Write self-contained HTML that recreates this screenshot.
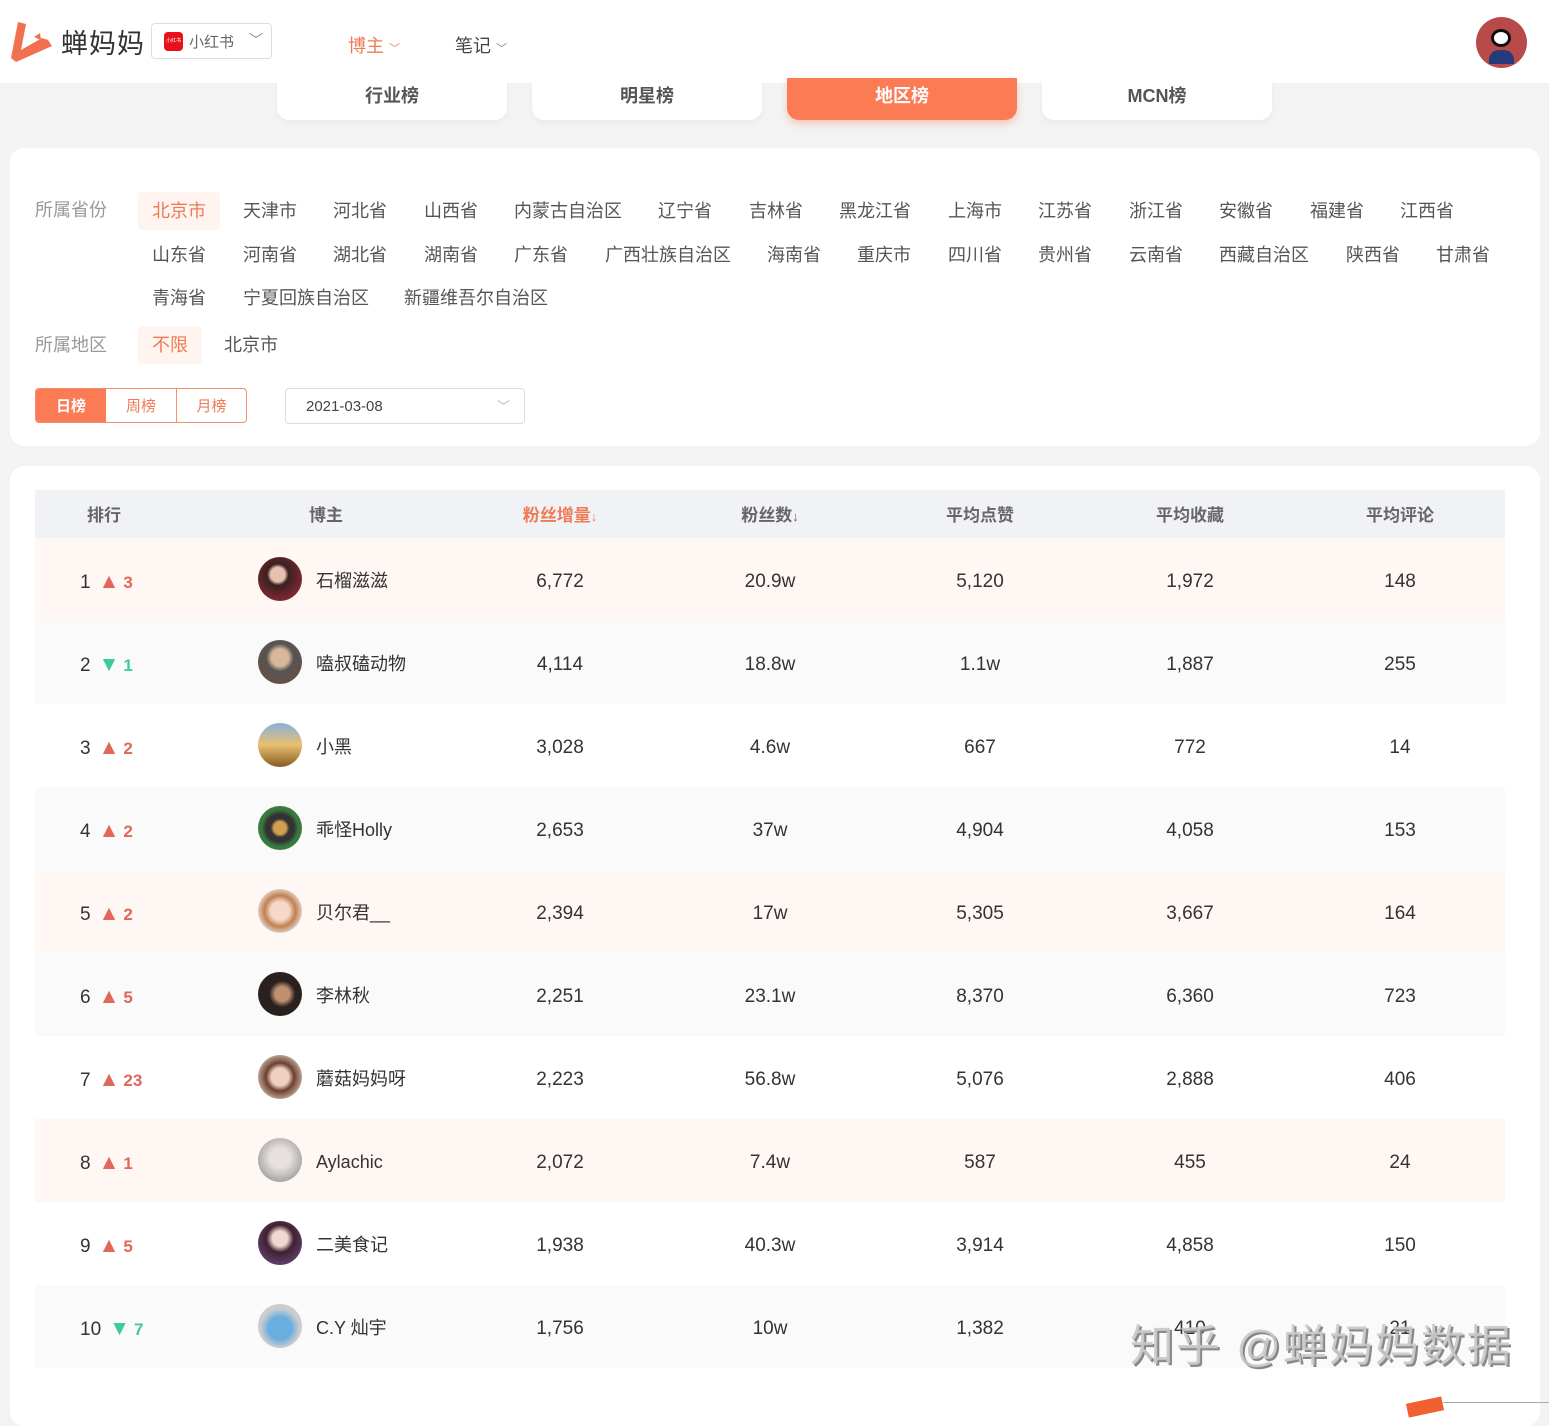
<!DOCTYPE html>
<html><head><meta charset="utf-8"><style>
*{margin:0;padding:0;box-sizing:border-box}
body{width:1549px;height:1410px;overflow:hidden;background:#f3f3f3;font-family:"Liberation Sans","Noto Sans CJK SC",sans-serif;color:#333;position:relative}
.abs{position:absolute}
.hdr{left:0;top:0;width:1549px;height:83px;background:#fff}
.tab{top:78px;width:230px;height:42px;background:#fff;border-radius:0 0 12px 12px;text-align:center;line-height:36px;font-size:18px;font-weight:bold;color:#555;box-shadow:0 3px 6px rgba(0,0,0,.04)}
.card{left:10px;width:1530px;background:#fff;border-radius:14px}
.p{font-size:18px;color:#555;white-space:nowrap;line-height:26px}
.lab{font-size:18px;color:#999;line-height:26px}
.sel{background:#fff4ef;color:#f07a56;padding:6px 14px;border-radius:4px}
.row{left:35px;width:1470px;height:83px}
.c{position:absolute;top:2px;height:100%;line-height:83px;font-size:19px;color:#333;text-align:center;width:200px}
.hc{position:absolute;top:2px;line-height:48px;font-size:17px;font-weight:bold;color:#666;text-align:center;width:200px}
.rk{position:absolute;left:45px;top:2px;line-height:83px;font-size:19px;color:#333}
.up{color:#e0675a;font-weight:bold;font-size:17px;margin-left:8px}
.dn{color:#3ccc9a;font-weight:bold;font-size:17px;margin-left:8px}
.t{font-size:21px;font-weight:normal;margin-right:4px}
.av{position:absolute;left:223px;top:19px;width:44px;height:44px;border-radius:50%}
.nm{position:absolute;left:281px;top:2px;line-height:83px;font-size:18px;color:#333}
</style></head><body>
<div class="abs hdr"></div>
<svg class="abs" style="left:8px;top:20px" width="46" height="44" viewBox="0 0 46 44"><path d="M10 2 L18 4 L13 30 L34 18 L40 20 L44 26 L8 42 L3 38 Z" fill="#f07050"/><path d="M26 17 L32 13 L33 20 Z" fill="#f07050"/></svg>
<div class="abs" style="left:61px;top:22px;font-size:27px;color:#333;letter-spacing:1px">蝉妈妈</div>
<div class="abs" style="left:151px;top:23px;width:121px;height:36px;border:1px solid #ddd;border-radius:4px"></div>
<div class="abs" style="left:164px;top:32px;width:19px;height:19px;background:#e8101a;border-radius:4px;font-size:5px;color:#fff;text-align:center;line-height:19px">小红书</div>
<div class="abs" style="left:189px;top:31px;font-size:15px;color:#666">小红书</div>
<div class="abs" style="left:249px;top:30px;font-size:14px;color:#888">﹀</div>
<div class="abs" style="left:348px;top:32px;font-size:18px;color:#f07a56">博主 <span style="font-size:11px">﹀</span></div>
<div class="abs" style="left:455px;top:32px;font-size:18px;color:#444">笔记 <span style="font-size:11px;color:#888">﹀</span></div>
<div class="abs" style="left:1476px;top:17px;width:51px;height:51px;border-radius:50%;background:#b84a4a"><div style="position:absolute;left:15px;top:12px;width:20px;height:18px;border-radius:50%;background:#fff;border:3px solid #111"></div><div style="position:absolute;left:13px;top:33px;width:25px;height:14px;border-radius:10px 10px 0 0;background:#243a7a"></div></div>

<div class="abs tab" style="left:277px">行业榜</div>
<div class="abs tab" style="left:532px">明星榜</div>
<div class="abs tab" style="left:787px;background:#fb7b55;color:#fff;box-shadow:0 4px 8px rgba(251,123,85,.35)">地区榜</div>
<div class="abs tab" style="left:1042px">MCN榜</div>

<div class="abs card" style="top:148px;height:298px"></div>
<div class="abs lab" style="left:35px;top:197px">所属省份</div>
<div class="abs p sel" style="left:138px;top:192px">北京市</div>
<div class="abs p" style="left:243px;top:198px">天津市</div>
<div class="abs p" style="left:333px;top:198px">河北省</div>
<div class="abs p" style="left:424px;top:198px">山西省</div>
<div class="abs p" style="left:514px;top:198px">内蒙古自治区</div>
<div class="abs p" style="left:658px;top:198px">辽宁省</div>
<div class="abs p" style="left:749px;top:198px">吉林省</div>
<div class="abs p" style="left:839px;top:198px">黑龙江省</div>
<div class="abs p" style="left:948px;top:198px">上海市</div>
<div class="abs p" style="left:1038px;top:198px">江苏省</div>
<div class="abs p" style="left:1129px;top:198px">浙江省</div>
<div class="abs p" style="left:1219px;top:198px">安徽省</div>
<div class="abs p" style="left:1310px;top:198px">福建省</div>
<div class="abs p" style="left:1400px;top:198px">江西省</div>
<div class="abs p" style="left:152px;top:242px">山东省</div>
<div class="abs p" style="left:243px;top:242px">河南省</div>
<div class="abs p" style="left:333px;top:242px">湖北省</div>
<div class="abs p" style="left:424px;top:242px">湖南省</div>
<div class="abs p" style="left:514px;top:242px">广东省</div>
<div class="abs p" style="left:605px;top:242px">广西壮族自治区</div>
<div class="abs p" style="left:767px;top:242px">海南省</div>
<div class="abs p" style="left:857px;top:242px">重庆市</div>
<div class="abs p" style="left:948px;top:242px">四川省</div>
<div class="abs p" style="left:1038px;top:242px">贵州省</div>
<div class="abs p" style="left:1129px;top:242px">云南省</div>
<div class="abs p" style="left:1219px;top:242px">西藏自治区</div>
<div class="abs p" style="left:1346px;top:242px">陕西省</div>
<div class="abs p" style="left:1436px;top:242px">甘肃省</div>
<div class="abs p" style="left:152px;top:285px">青海省</div>
<div class="abs p" style="left:243px;top:285px">宁夏回族自治区</div>
<div class="abs p" style="left:404px;top:285px">新疆维吾尔自治区</div>
<div class="abs lab" style="left:35px;top:332px">所属地区</div>
<div class="abs p sel" style="left:138px;top:326px">不限</div>
<div class="abs p" style="left:224px;top:332px">北京市</div>

<div class="abs" style="left:35px;top:388px;width:212px;height:35px;border:1px solid #f0906e;border-radius:4px;overflow:hidden;display:flex;font-size:15px">
<div style="width:70px;background:#fb7b55;color:#fff;text-align:center;line-height:35px;font-weight:bold">日榜</div>
<div style="width:71px;color:#f07a56;text-align:center;line-height:35px;border-right:1px solid #f0906e">周榜</div>
<div style="flex:1;color:#f07a56;text-align:center;line-height:35px">月榜</div></div>
<div class="abs" style="left:285px;top:388px;width:240px;height:36px;border:1px solid #ddd;border-radius:4px;font-size:15px;color:#444;line-height:36px;padding-left:20px">2021-03-08<span style="position:absolute;right:14px;top:0;color:#bbb;font-size:13px">﹀</span></div>

<div class="abs card" style="top:466px;height:960px"></div>
<div class="abs" style="left:35px;top:490px;width:1470px;height:48px;background:#f0f2f5">
<div class="hc" style="left:-31px">排行</div>
<div class="hc" style="left:191px">博主</div>
<div class="hc" style="left:425px;color:#f07a56">粉丝增量<span style="font-size:13px">↓</span></div>
<div class="hc" style="left:635px">粉丝数<span style="font-size:13px">↓</span></div>
<div class="hc" style="left:845px">平均点赞</div>
<div class="hc" style="left:1055px">平均收藏</div>
<div class="hc" style="left:1265px">平均评论</div>
</div>

<div class="abs row" style="top:538px;background:#fff7f4"><div class="rk">1<span class="up"><span class="t">▲</span>3</span></div><div class="av" style="background:radial-gradient(circle at 45% 40%,#e8c0b0 0 20%,#3a2020 30%,#8a2a35 80%)"></div><div class="nm">石榴滋滋</div><div class="c" style="left:425px">6,772</div><div class="c" style="left:635px">20.9w</div><div class="c" style="left:845px">5,120</div><div class="c" style="left:1055px">1,972</div><div class="c" style="left:1265px">148</div></div>
<div class="abs row" style="top:621px;background:#fafafa"><div class="rk">2<span class="dn"><span class="t">▼</span>1</span></div><div class="av" style="background:radial-gradient(circle at 50% 40%,#d8b898 0 25%,#555 40%,#6a5040 80%)"></div><div class="nm">嗑叔磕动物</div><div class="c" style="left:425px">4,114</div><div class="c" style="left:635px">18.8w</div><div class="c" style="left:845px">1.1w</div><div class="c" style="left:1055px">1,887</div><div class="c" style="left:1265px">255</div></div>
<div class="abs row" style="top:704px;background:#fff"><div class="rk">3<span class="up"><span class="t">▲</span>2</span></div><div class="av" style="background:linear-gradient(#8ab0d8,#e8c070 50%,#8a5a20)"></div><div class="nm">小黑</div><div class="c" style="left:425px">3,028</div><div class="c" style="left:635px">4.6w</div><div class="c" style="left:845px">667</div><div class="c" style="left:1055px">772</div><div class="c" style="left:1265px">14</div></div>
<div class="abs row" style="top:787px;background:#fafafa"><div class="rk">4<span class="up"><span class="t">▲</span>2</span></div><div class="av" style="background:radial-gradient(circle,#d0a050 0 20%,#333 30% 45%,#3a7a40 60%)"></div><div class="nm">乖怪Holly</div><div class="c" style="left:425px">2,653</div><div class="c" style="left:635px">37w</div><div class="c" style="left:845px">4,904</div><div class="c" style="left:1055px">4,058</div><div class="c" style="left:1265px">153</div></div>
<div class="abs row" style="top:870px;background:#fff7f4"><div class="rk">5<span class="up"><span class="t">▲</span>2</span></div><div class="av" style="background:radial-gradient(circle at 50% 50%,#f5d8c8 0 30%,#c08050 50%,#eee 80%)"></div><div class="nm">贝尔君__</div><div class="c" style="left:425px">2,394</div><div class="c" style="left:635px">17w</div><div class="c" style="left:845px">5,305</div><div class="c" style="left:1055px">3,667</div><div class="c" style="left:1265px">164</div></div>
<div class="abs row" style="top:953px;background:#fafafa"><div class="rk">6<span class="up"><span class="t">▲</span>5</span></div><div class="av" style="background:radial-gradient(circle at 55% 50%,#c09070 0 22%,#2a2020 40%)"></div><div class="nm">李林秋</div><div class="c" style="left:425px">2,251</div><div class="c" style="left:635px">23.1w</div><div class="c" style="left:845px">8,370</div><div class="c" style="left:1055px">6,360</div><div class="c" style="left:1265px">723</div></div>
<div class="abs row" style="top:1036px;background:#fff"><div class="rk">7<span class="up"><span class="t">▲</span>23</span></div><div class="av" style="background:radial-gradient(circle at 50% 50%,#f0d0c0 0 28%,#6a4030 45%,#d8c0b0 80%)"></div><div class="nm">蘑菇妈妈呀</div><div class="c" style="left:425px">2,223</div><div class="c" style="left:635px">56.8w</div><div class="c" style="left:845px">5,076</div><div class="c" style="left:1055px">2,888</div><div class="c" style="left:1265px">406</div></div>
<div class="abs row" style="top:1119px;background:#fff7f4"><div class="rk">8<span class="up"><span class="t">▲</span>1</span></div><div class="av" style="background:radial-gradient(circle at 50% 45%,#e8e0e0 0 30%,#aaa 70%)"></div><div class="nm">Aylachic</div><div class="c" style="left:425px">2,072</div><div class="c" style="left:635px">7.4w</div><div class="c" style="left:845px">587</div><div class="c" style="left:1055px">455</div><div class="c" style="left:1265px">24</div></div>
<div class="abs row" style="top:1202px;background:#fff"><div class="rk">9<span class="up"><span class="t">▲</span>5</span></div><div class="av" style="background:radial-gradient(circle at 50% 40%,#f0d8d0 0 22%,#402030 40%,#5a3a60 70%)"></div><div class="nm">二美食记</div><div class="c" style="left:425px">1,938</div><div class="c" style="left:635px">40.3w</div><div class="c" style="left:845px">3,914</div><div class="c" style="left:1055px">4,858</div><div class="c" style="left:1265px">150</div></div>
<div class="abs row" style="top:1285px;background:#fafafa"><div class="rk">10<span class="dn"><span class="t">▼</span>7</span></div><div class="av" style="background:radial-gradient(circle at 50% 55%,#6aaee0 0 35%,#ccc 60%)"></div><div class="nm">C.Y 灿宇</div><div class="c" style="left:425px">1,756</div><div class="c" style="left:635px">10w</div><div class="c" style="left:845px">1,382</div><div class="c" style="left:1055px">410</div><div class="c" style="left:1265px">21</div></div>

<div class="abs" style="left:1130px;top:1310px;font-size:44px;color:rgba(200,200,200,.9);text-shadow:2px 2px 0 #888;letter-spacing:2px;white-space:nowrap">知乎 @蝉妈妈数据</div>
<div class="abs" style="left:1540px;top:466px;width:9px;height:944px;background:#f3f3f3"></div>
<div class="abs" style="left:1407px;top:1400px;width:36px;height:14px;background:#f06030;transform:rotate(-12deg)"></div>
<div class="abs" style="left:1443px;top:1402px;width:106px;height:1px;background:#aaa"></div>
</body></html>
